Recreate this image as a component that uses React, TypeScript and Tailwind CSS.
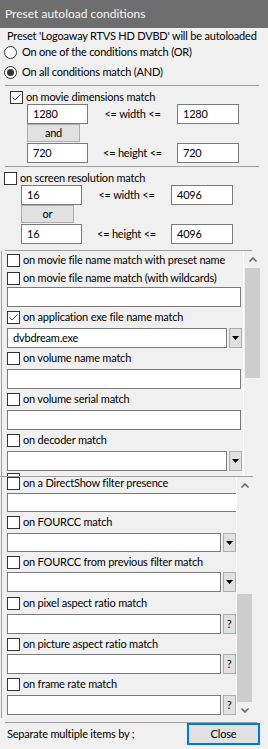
import React from 'react'

function Box({ checked }: { checked?: boolean }) {
  return (
    <span className="w-[13px] h-[13px] border border-[#333333] bg-white shrink-0 flex items-center justify-center">
      {checked && (
        <svg width="11" height="11" viewBox="0 0 11 11">
          <polyline points="1.5,5.5 4,8 9.5,2.5" fill="none" stroke="#555" strokeWidth="1" />
        </svg>
      )}
    </span>
  )
}

function CheckRow({ label, checked, h }: { label: string; checked?: boolean; h: string }) {
  return (
    <div className={`flex items-center ${h}`}>
      <Box checked={checked} />
      <span className="ml-[3px] whitespace-nowrap">{label}</span>
    </div>
  )
}

function Radio({ label, checked }: { label: string; checked?: boolean }) {
  return (
    <div className="flex items-center h-[16px] pl-[4px]">
      <span className="w-[13px] h-[13px] rounded-full border border-[#333333] bg-white flex items-center justify-center shrink-0">
        {checked && <span className="w-[7px] h-[7px] rounded-full bg-[#333333]" />}
      </span>
      <span className="ml-[5px] whitespace-nowrap">{label}</span>
    </div>
  )
}

function TextBox({ value, w, h }: { value?: string; w: string; h: string }) {
  return (
    <div className={`${w} ${h} border border-[#7a7a7a] bg-white flex items-center pl-[5px] shrink-0`}>
      {value}
    </div>
  )
}

function Combo({ value, h }: { value?: string; h: string }) {
  return (
    <div className={`flex ${h}`}>
      <div className="w-[220px] h-full border border-[#7a7a7a] bg-white flex items-center pl-[5px]">{value}</div>
      <div className="ml-[2px] w-[13px] h-full border border-[#adadad] bg-[#e1e1e1] flex items-center justify-center">
        <svg width="7" height="4" viewBox="0 0 7 4">
          <polygon points="0,0 7,0 3.5,4" fill="#000" />
        </svg>
      </div>
    </div>
  )
}

function Help({ h }: { h: string }) {
  return (
    <div className={`flex ${h}`}>
      <div className="w-[220px] h-full border border-[#7a7a7a] bg-white" />
      <div className="ml-[2px] w-[13px] h-full border border-[#adadad] bg-[#e1e1e1] flex items-center justify-center text-[11px]">?</div>
    </div>
  )
}

function Chevron({ up }: { up?: boolean }) {
  return (
    <svg width="8" height="5" viewBox="0 0 8 5">
      <polyline points={up ? '0.5,4.5 4,1 7.5,4.5' : '0.5,0.5 4,4 7.5,0.5'} fill="none" stroke="#606060" strokeWidth="1.5" />
    </svg>
  )
}

function RangeRow({ a, b, label }: { a: string; b: string; label: string }) {
  return (
    <div className="flex h-[20px]">
      <TextBox value={a} w="w-[61px]" h="h-full" />
      <div className="w-[89px] flex items-center justify-center">{label}</div>
      <TextBox value={b} w="w-[62px]" h="h-full" />
    </div>
  )
}

export default function App() {
  return (
    <div className="w-[268px] h-[749px] bg-[#f0f0f0] text-black text-[11px] tracking-[-0.2px] font-['Lato',sans-serif] overflow-hidden">
      <div className="h-[28px] bg-[#6e6e6e] text-[#f5f5f5] text-[12px] tracking-normal flex items-center pl-[5px]">Preset autoload conditions</div>

      <div className="h-[16px] flex items-center pl-[7px] whitespace-nowrap">Preset 'Logoaway RTVS HD DVBD' will be autoloaded</div>
      <Radio label="On one of the conditions match (OR)" />
      <div className="mt-[4px]">
        <Radio label="On all conditions match (AND)" checked />
      </div>
      <div className="mt-[5px] ml-[5px] w-[254px] h-px bg-[#a0a0a0]" />

      <div className="pl-[10px] pt-[4px]">
        <CheckRow label="on movie dimensions match" checked h="h-[14px]" />
      </div>
      <div className="pl-[27px]">
        <RangeRow a="1280" b="1280" label="<= width <=" />
        <div className="w-[53px] h-[18px] border border-[#adadad] bg-[#e1e1e1] flex items-center justify-center">and</div>
        <div className="mt-px">
          <RangeRow a="720" b="720" label="<= height <=" />
        </div>
      </div>
      <div className="mt-[3px] ml-[5px] w-[254px] h-px bg-[#a0a0a0]" />

      <div className="pl-[4px] pt-[4px]">
        <CheckRow label="on screen resolution match" h="h-[14px]" />
      </div>
      <div className="pl-[21px]">
        <RangeRow a="16" b="4096" label="<= width <=" />
        <div className="w-[53px] h-[18px] border border-[#adadad] bg-[#e1e1e1] flex items-center justify-center">or</div>
        <div className="mt-px">
          <RangeRow a="16" b="4096" label="<= height <=" />
        </div>
      </div>
      <div className="mt-[6px] ml-[5px] w-[247px] h-px bg-[#a0a0a0]" />

      <div className="flex h-[225px]">
        <div className="ml-[1px] w-[242px] border-l border-[#a0a0a0] pl-[5px] overflow-hidden">
          <CheckRow label="on movie file name match with preset name" h="h-[18px]" />
          <CheckRow label="on movie file name match (with wildcards)" h="h-[18px]" />
          <TextBox w="w-[234px]" h="h-[20px]" />
          <CheckRow label="on application exe file name match" checked h="h-[21px]" />
          <Combo value="dvbdream.exe" h="h-[20px]" />
          <CheckRow label="on volume name match" h="h-[21px]" />
          <TextBox w="w-[234px]" h="h-[20px]" />
          <CheckRow label="on volume serial match" h="h-[21px]" />
          <TextBox w="w-[234px]" h="h-[20px]" />
          <CheckRow label="on decoder match" h="h-[21px]" />
          <Combo h="h-[20px]" />
          <div className="h-[5px] overflow-hidden">
            <div className="pt-[2px]">
              <Box />
            </div>
          </div>
        </div>
        <div className="w-[18px] border-l border-white flex flex-col items-center">
          <div className="h-[17px] flex items-center justify-center">
            <Chevron up />
          </div>
          <div className="w-[15px] h-[110px] bg-[#cdcdcd]" />
        </div>
      </div>

      <div className="flex h-[242px] border-t border-[#a0a0a0] w-[253px]">
        <div className="ml-[1px] w-[242px] border-l border-[#a0a0a0] pl-[5px] overflow-hidden">
          <div className="-mt-[4px]">
            <CheckRow label="on a DirectShow filter presence" h="h-[20px]" />
            <TextBox w="w-[234px]" h="h-[19px]" />
            <CheckRow label="on FOURCC match" h="h-[21px]" />
            <Combo h="h-[19px]" />
            <CheckRow label="on FOURCC from previous filter match" h="h-[20px]" />
            <Combo h="h-[20px]" />
            <CheckRow label="on pixel aspect ratio match" h="h-[22px]" />
            <Help h="h-[20px]" />
            <CheckRow label="on picture aspect ratio match" h="h-[20px]" />
            <Help h="h-[20px]" />
            <CheckRow label="on frame rate match" h="h-[21px]" />
            <Help h="h-[20px]" />
          </div>
        </div>
        <div className="w-[18px] border-l border-white flex flex-col items-center">
          <div className="h-[17px] flex items-center justify-center">
            <Chevron up />
          </div>
          <div className="flex-1 w-full flex flex-col items-center">
            <div className="mt-[100px] w-[15px] h-[108px] bg-[#cdcdcd]" />
          </div>
          <div className="h-[16px] flex items-center justify-center">
            <Chevron />
          </div>
        </div>
      </div>

      <div className="mt-[4px] ml-[5px] w-[252px] h-px bg-[#a0a0a0]" />
      <div className="flex items-center h-[22px]">
        <span className="pl-[7px] whitespace-nowrap">Separate multiple items by ;</span>
        <div className="ml-auto mr-[8px] w-[73px] h-[22px] border-2 border-[#0078d7] bg-[#e1e1e1] flex items-center justify-center">Close</div>
      </div>
    </div>
  )
}
